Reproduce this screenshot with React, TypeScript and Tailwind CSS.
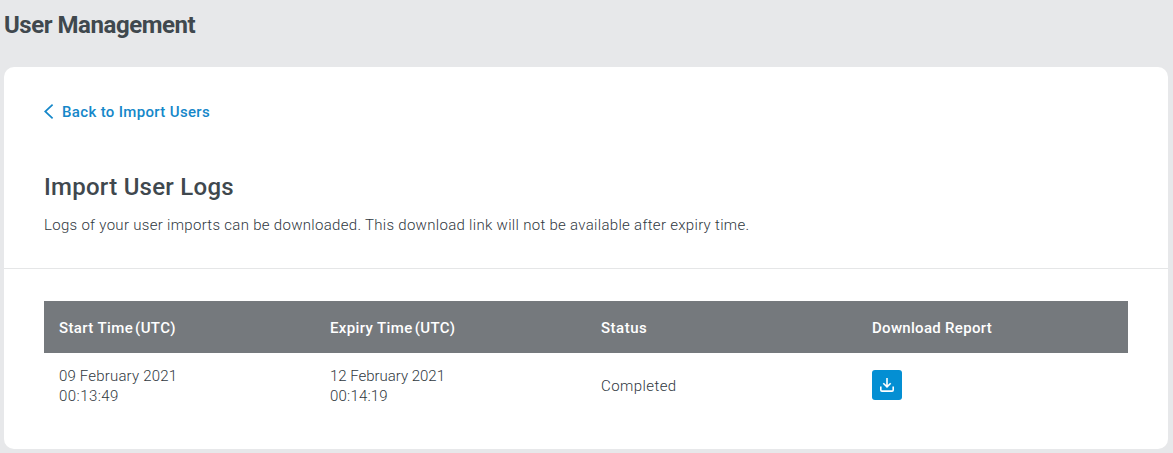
const columns = [
  { label: "Start Time", suffix: "(UTC)", tracking: "tracking-[0.38px]" },
  { label: "Expiry Time", suffix: "(UTC)", tracking: "tracking-[0.38px]" },
  { label: "Status", suffix: "", tracking: "tracking-[0.5px]" },
  { label: "Download Report", suffix: "", tracking: "tracking-[0.3px]" },
];

const rows = [
  { start: ["09 February 2021", "00:13:49"], expiry: ["12 February 2021", "00:14:19"], status: "Completed" },
];

function ChevronLeft() {
  return (
    <svg width="10" height="15" viewBox="0 0 10 15" fill="none" stroke="currentColor" strokeWidth="1.7">
      <path d="M8.6 .7 1.2 7.5l7.4 6.8" />
    </svg>
  );
}

function DownloadIcon() {
  return (
    <svg width="14" height="14" viewBox="0 0 14 14" fill="none" stroke="currentColor" strokeWidth="1.6">
      <path d="M7 0v8.6M3.3 5.2 7 8.9l3.7-3.7" />
      <path d="M.8 8.5v3.4q0 1.2 1.2 1.2h10q1.2 0 1.2-1.2V8.5" />
    </svg>
  );
}

export default function App() {
  return (
    <div className="h-[453px] bg-[#e7e8ea] pr-[5px] pl-1 font-['Roboto',sans-serif] text-[15px] text-[#40484e]">
      <header className="flex h-[67px] items-start pt-[9px]">
        <h1 className="text-2xl leading-8 font-bold tracking-[-0.46px] whitespace-nowrap">User Management</h1>
      </header>
      <main className="h-[382px] rounded-[10px] bg-white">
        <section className="h-[202px] border-b border-[#e5e6e7] px-10 pt-[34px]">
          <a href="#" className="flex h-5 w-fit items-center gap-2 font-medium text-[#1587c9]">
            <ChevronLeft />
            <span className="pt-0.5 tracking-[0.34px] whitespace-nowrap">Back to Import Users</span>
          </a>
          <h2 className="mt-[50px] w-fit text-2xl leading-8 font-medium tracking-[0.26px] whitespace-nowrap">Import User Logs</h2>
          <p className="mt-[12px] w-fit leading-5 font-light tracking-[0.3px] whitespace-nowrap text-[#30383e]">
            Logs of your user imports can be downloaded. This download link will not be available after expiry time.
          </p>
        </section>
        <section className="px-10 pt-8">
          <div className="grid h-[52px] grid-cols-4 items-center bg-[#75797d] pt-0.5 font-medium text-white">
            {columns.map((column) => (
              <div key={column.label} className={`flex gap-0.5 pl-[15px] ${column.tracking}`}>
                <span>{column.label}</span>
                {column.suffix && <span>{column.suffix}</span>}
              </div>
            ))}
          </div>
          {rows.map((row) => (
            <div key={row.start[1]} className="grid h-16 grid-cols-4 items-center leading-5 font-light text-[#30383e]">
              <div className="pt-0.5 pl-[15px]">
                <p className="tracking-[0.18px]">{row.start[0]}</p>
                <p className="tracking-[0.45px]">{row.start[1]}</p>
              </div>
              <div className="pt-0.5 pl-[15px]">
                <p className="tracking-[-0.02px]">{row.expiry[0]}</p>
                <p className="tracking-[0.2px]">{row.expiry[1]}</p>
              </div>
              <div className="pt-0.5 pl-[15px] tracking-[0.42px]">{row.status}</div>
              <div className="pl-[15px]">
                <button aria-label="Download report" className="flex size-[30px] items-center justify-center rounded-[3px] bg-[#048fd3] text-white">
                  <DownloadIcon />
                </button>
              </div>
            </div>
          ))}
        </section>
      </main>
    </div>
  );
}
